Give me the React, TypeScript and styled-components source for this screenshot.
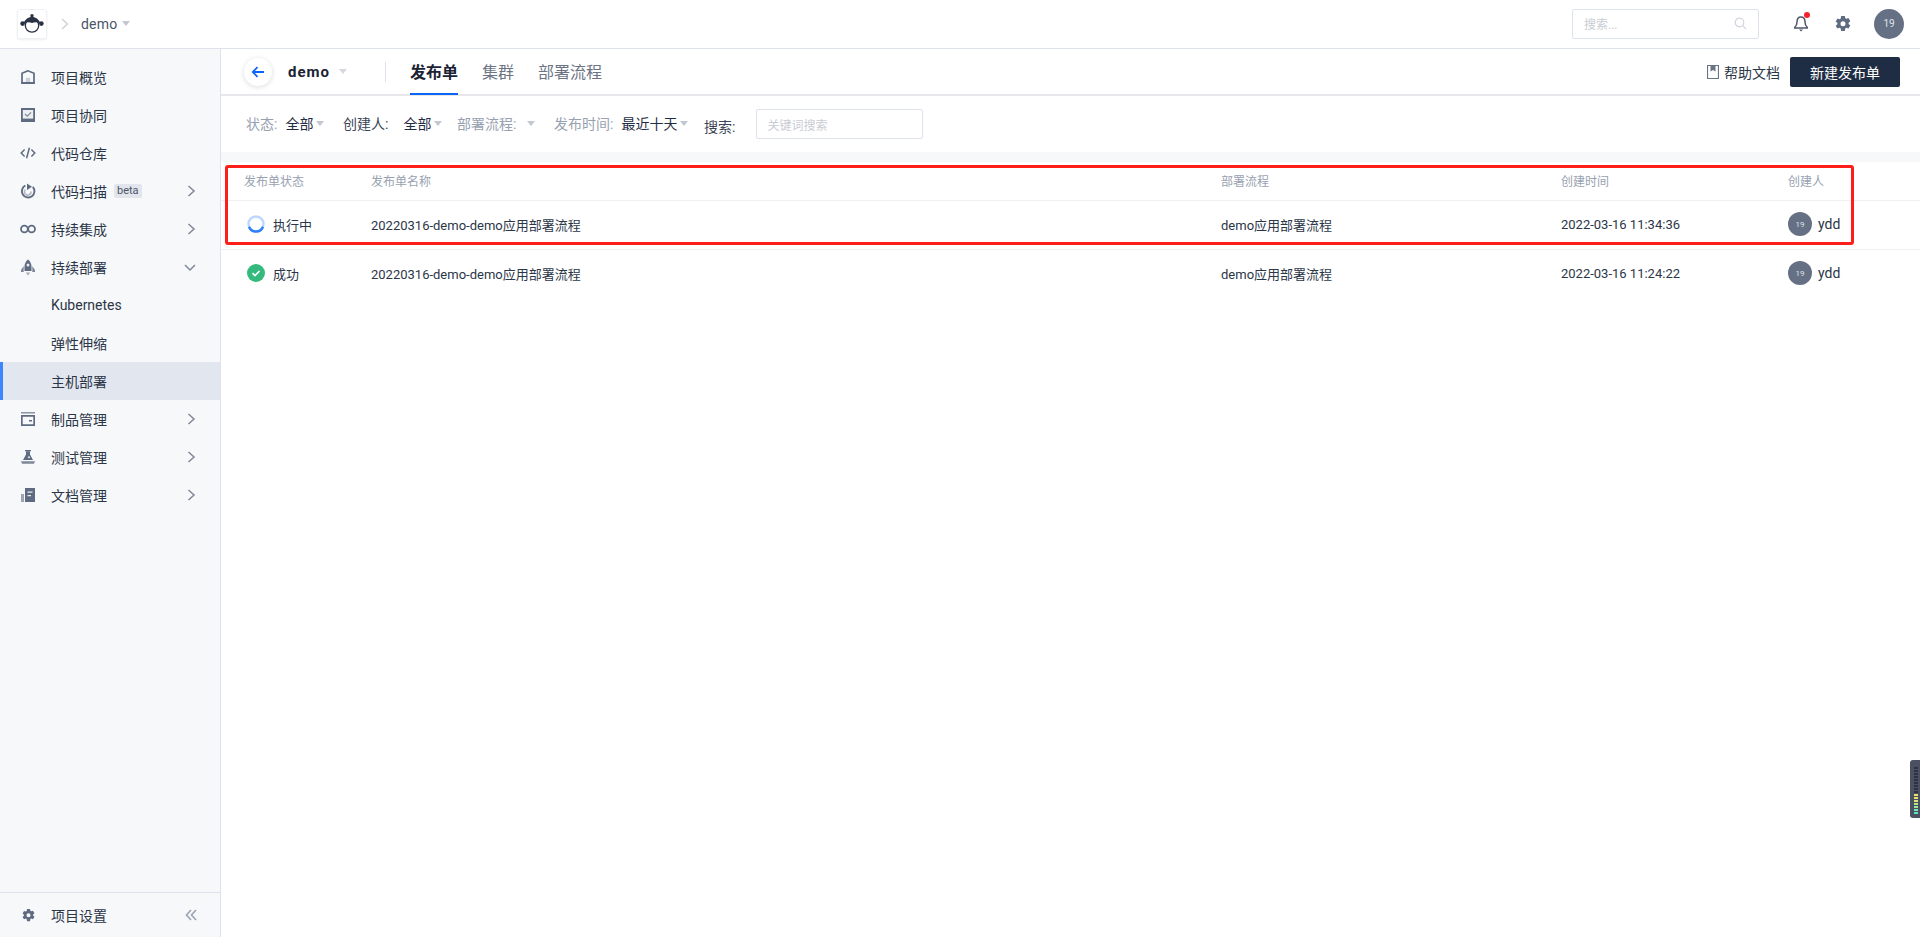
import React from "react";
import styled, { createGlobalStyle } from "styled-components";

const Global = createGlobalStyle`
  html, body { margin: 0; padding: 0; height: 100%; background: #fff; }
  body { font-family: Roboto, "Noto Sans CJK SC", "Noto Sans", sans-serif; color: #1f2d44; overflow: hidden; }
  #root { height: 100%; }
  * { box-sizing: border-box; }
`;

const Page = styled.div`
  position: relative;
  width: 1920px;
  height: 937px;
  display: flex;
  flex-direction: column;
  overflow: hidden;
`;

const TopBar = styled.header`
  height: 49px;
  flex: none;
  border-bottom: 1px solid #dde2ec;
  display: flex;
  align-items: center;
  padding: 0 16px 1px 17px;
`;
const LogoBox = styled.div`
  width: 30px;
  height: 30px;
  border: 1px solid #eef0f4;
  border-radius: 3px;
  box-shadow: 0 1px 2px rgba(30, 40, 70, 0.08);
  display: flex;
  align-items: center;
  justify-content: center;
`;
const Crumb = styled.span`
  display: flex;
  margin: 0 12px 0 14px;
  color: #c9ced8;
`;
const ProjectName = styled.span`
  font-size: 14px;
  letter-spacing: 0.2px;
  color: #4a5568;
`;
const Caret = styled.span<{ $color?: string; $left?: number }>`
  display: inline-block;
  width: 0;
  height: 0;
  margin-left: ${(p) => p.$left ?? 5}px;
  border-left: 4px solid transparent;
  border-right: 4px solid transparent;
  border-top: 5px solid ${(p) => p.$color ?? "#c2c7d0"};
`;
const Spacer = styled.div`
  flex: 1;
`;
const GlobalSearch = styled.div`
  width: 187px;
  height: 30px;
  border: 1px solid #dde2ec;
  border-radius: 2px;
  display: flex;
  align-items: center;
  justify-content: space-between;
  padding: 0 11px;
  font-size: 12px;
  color: #c8ccd3;
`;
const TopIcon = styled.div<{ $left: number }>`
  position: relative;
  display: flex;
  margin-left: ${(p) => p.$left}px;
`;
const RedDot = styled.span`
  position: absolute;
  top: -3px;
  right: -1px;
  width: 6px;
  height: 6px;
  border-radius: 50%;
  background: #f5222d;
`;
const Avatar = styled.div<{ $size: number; $font: number; $left?: number }>`
  width: ${(p) => p.$size}px;
  height: ${(p) => p.$size}px;
  margin-left: ${(p) => p.$left ?? 0}px;
  flex: none;
  border-radius: 50%;
  background: #667085;
  color: #dfe3ea;
  font-size: ${(p) => p.$font}px;
  display: flex;
  align-items: center;
  justify-content: center;
`;

const Body = styled.div`
  flex: 1;
  display: flex;
  min-height: 0;
`;
const Sidebar = styled.aside`
  width: 221px;
  flex: none;
  background: #f7f8fa;
  border-right: 1px solid #dde2ec;
  display: flex;
  flex-direction: column;
`;
const NavList = styled.nav`
  flex: 1;
  padding-top: 9px;
`;
const NavItem = styled.div<{ $active?: boolean; $sub?: boolean }>`
  height: 38px;
  display: flex;
  align-items: center;
  padding: 0 24px 0 ${(p) => (p.$sub ? (p.$active ? 48 : 51) : 20)}px;
  font-size: 14px;
  color: #2b3648;
  background: ${(p) => (p.$active ? "#e2e6ef" : "transparent")};
  border-left: ${(p) => (p.$active ? "3px solid #3d85ff" : "0")};
`;
const NavIcon = styled.span`
  width: 16px;
  height: 16px;
  margin-right: 15px;
  display: flex;
  align-items: center;
  justify-content: center;
  flex: none;
`;
const NavLabel = styled.span`
  flex: 1;
  display: flex;
  align-items: center;
`;
const Beta = styled.span`
  margin-left: 7px;
  padding: 0 3px;
  background: #e2e6ec;
  border-radius: 2px;
  font-size: 11px;
  line-height: 14px;
  color: #4a5568;
`;
const SideFooter = styled.div`
  height: 45px;
  flex: none;
  border-top: 1px solid #dde2ec;
  display: flex;
  align-items: center;
  padding: 0 23px 0 20px;
  font-size: 14px;
  color: #2b3648;
`;

const Main = styled.main`
  flex: 1;
  min-width: 0;
  display: flex;
  flex-direction: column;
`;
const SubHeader = styled.div`
  height: 47px;
  flex: none;
  border-bottom: 2px solid #e6e8ec;
  display: flex;
  align-items: center;
  padding: 0 20px 0 23px;
`;
const BackButton = styled.div`
  width: 28px;
  height: 28px;
  border-radius: 50%;
  background: #fff;
  box-shadow: 0 1px 5px rgba(30, 40, 70, 0.16);
  display: flex;
  align-items: center;
  justify-content: center;
`;
const AppName = styled.span`
  margin-left: 16px;
  font-size: 15px;
  font-weight: 700;
  letter-spacing: 1px;
  color: #1a2233;
`;
const VDivider = styled.span`
  width: 1px;
  height: 20px;
  background: #dde2ec;
  margin: 0 24px 0 38px;
`;
const Tab = styled.div<{ $active?: boolean }>`
  height: 45px;
  margin-right: 24px;
  margin-bottom: -2px;
  padding-bottom: 1px;
  display: flex;
  align-items: center;
  font-size: 16px;
  font-weight: ${(p) => (p.$active ? 600 : 400)};
  color: ${(p) => (p.$active ? "#1a2233" : "#6b7485")};
  border-bottom: 2px solid ${(p) => (p.$active ? "#0b66f5" : "transparent")};
`;
const HelpLink = styled.div`
  display: flex;
  align-items: center;
  gap: 5px;
  font-size: 14px;
  color: #2b3648;
`;
const PrimaryButton = styled.div`
  width: 110px;
  height: 30px;
  margin-left: 10px;
  border-radius: 2px;
  background: #1f2d44;
  color: #fff;
  font-size: 14px;
  display: flex;
  align-items: center;
  justify-content: center;
`;
const FilterBar = styled.div`
  height: 56px;
  flex: none;
  display: flex;
  align-items: center;
  padding: 0 0 0 25px;
  font-size: 14px;
`;
const FilterLabel = styled.span<{ $dark?: boolean }>`
  color: ${(p) => (p.$dark ? "#3a4556" : "#98a1b0")};
`;
const SearchLabel = styled.span`
  padding-top: 4px;
  color: #3a4556;
`;
const FilterValue = styled.span<{ $gap: number }>`
  margin-left: ${(p) => p.$gap}px;
  color: #1f2d44;
  display: flex;
  align-items: center;
`;
const Filter = styled.div<{ $width: number }>`
  width: ${(p) => p.$width}px;
  padding-bottom: 2px;
  display: flex;
  align-items: center;
`;
const KeywordInput = styled.div`
  width: 167px;
  height: 30px;
  margin-left: 21px;
  border: 1px solid #dde2ec;
  border-radius: 2px;
  display: flex;
  align-items: center;
  padding-left: 10px;
  font-size: 12px;
  color: #c8ccd3;
`;
const Strip = styled.div`
  height: 10px;
  flex: none;
  background: #f7f8fa;
`;
const Row = styled.div<{ $header?: boolean; $last?: boolean }>`
  height: ${(p) => (p.$header ? 39 : 49)}px;
  flex: none;
  display: grid;
  grid-template-columns: 127px 850px 340px 227px 1fr;
  align-items: center;
  padding: 0 0 2px 23px;
  border-bottom: 1px solid ${(p) => (p.$last ? "transparent" : "#eef0f3")};
  font-size: ${(p) => (p.$header ? 12 : 13)}px;
  color: ${(p) => (p.$header ? "#98a1b0" : "#2b3648")};
`;
const StatusCell = styled.div`
  display: flex;
  align-items: center;
  gap: 8px;
  padding-left: 3px;
`;
const UserCell = styled.div`
  display: flex;
  align-items: center;
  gap: 6px;
  font-size: 14px;
`;
const Highlight = styled.div`
  position: absolute;
  left: 225px;
  top: 165px;
  width: 1629px;
  height: 80px;
  border: 3px solid #ff1f1a;
  border-radius: 3px;
  pointer-events: none;
`;
const Widget = styled.div`
  position: absolute;
  right: 0;
  top: 760px;
  width: 10px;
  height: 58px;
  background: #4b5163;
  border-radius: 3px 0 0 3px;
  padding: 7px 0 0 4px;
  display: flex;
  flex-direction: column;
  gap: 1px;
`;
const Tick = styled.span<{ $color: string }>`
  display: block;
  width: 4px;
  height: 2px;
  background: ${(p) => p.$color};
`;

const ic = "#5f6b80";
const chev = "#7f8899";

const HomeIcon = () => (
  <svg width="16" height="16" viewBox="0 0 16 16"><path d="M8 1.800 2 4.300V14h12V4.300z" fill="none" stroke={ic} strokeWidth="1.700" /><rect x="1.200" y="13" width="13.600" height="2" fill={ic} /><rect x="5.800" y="8.800" width="4.400" height="4.400" fill={ic} opacity=".28" /></svg>
);
const TaskIcon = () => (
  <svg width="16" height="16" viewBox="0 0 16 16"><path d="M1 1h14v14H1z" fill={ic} /><path d="M2.800 3h10.400v8.600H2.800z" fill="#eceef2" /><path d="m5 7 2.300 2.200 3.800-3.800" stroke={ic} strokeWidth="1.300" fill="none" opacity=".75" /></svg>
);
const CodeIcon = () => (
  <svg width="16" height="16" viewBox="0 0 16 16" fill="none" stroke={ic} strokeWidth="1.500"><path d="M4.600 4.500 1.200 8l3.400 3.500M11.400 4.500 14.800 8l-3.400 3.500" /><path d="M9.400 2.800 6.600 13.200" /></svg>
);
const ScanIcon = () => (
  <svg width="16" height="16" viewBox="0 0 16 16" fill="none"><path d="M5.400 2.500a6.300 6.300 0 1 0 7.400 1.400" stroke={ic} strokeWidth="1.900" /><path d="M7 .5 12 3.800 7 7Z" fill={ic} /><path d="M5.400 6.500A3.300 3.300 0 1 0 11 8.500" stroke={ic} strokeWidth="1.700" opacity=".45" /></svg>
);
const InfinityIcon = () => (
  <svg width="16" height="16" viewBox="0 0 16 16" fill="none" stroke={ic} strokeWidth="1.800"><circle cx="4.400" cy="8" r="3.400" /><circle cx="11.600" cy="8" r="3.400" /></svg>
);
const RocketIcon = () => (
  <svg width="16" height="17" viewBox="0 0 16 17"><path d="M8 .5C5.500 2.500 4.500 5 4.500 8v4h7V8c0-3-1-5.500-3.500-7.500Z" fill={ic} /><circle cx="8" cy="6" r="1.500" fill="#eceef2" /><path d="M3.700 7 1 11v2h2.700zM12.300 7 15 11v2h-2.700z" fill={ic} opacity=".8" /><path d="M5.800 13.500h4.400L8 16.500z" fill={ic} opacity=".55" /></svg>
);
const BoxIcon = () => (
  <svg width="16" height="16" viewBox="0 0 16 16"><rect x="1" y="1" width="14" height="1.500" fill={ic} opacity=".7" /><path fillRule="evenodd" d="M1 4h14v11H1zm1.700 1.700v7.600h10.600V5.700z" fill={ic} /><rect x="9" y="9" width="3" height="1.500" fill={ic} /></svg>
);
const FlaskIcon = () => (
  <svg width="16" height="16" viewBox="0 0 16 16"><rect x="5" y="1" width="6" height="1.300" fill={ic} /><path d="M6 2.300h4v3.200L13 11H3l3-5.500z" fill={ic} /><path d="M1 12.200h14l-1 2.500H2z" fill={ic} opacity=".8" /><circle cx="9" cy="8.300" r="1" fill="#eceef2" /></svg>
);
const DocIcon = () => (
  <svg width="16" height="16" viewBox="0 0 16 16"><path d="M1 7h3v8H1z" fill={ic} opacity=".6" /><path d="M5 1h10v14H5z" fill={ic} /><path d="M7.500 4.500h5v1.300h-5zM7.500 8h3.500v1.300H7.500z" fill="#eceef2" /></svg>
);
const GearIcon = ({ size = 16, color = ic }: { size?: number; color?: string }) => (
  <svg width={size} height={size} viewBox="0 0 16 16"><path fillRule="evenodd" clipRule="evenodd" d="M6.200 0h3.600l.5 2.200 1 .6 2.200-.7 1.800 3.100-1.700 1.500v1.200l1.700 1.500-1.800 3.100-2.200-.7-1 .6-.5 2.600H6.200l-.5-2.600-1-.6-2.200.7L.7 9.800l1.700-1.500V7.100L.7 5.600l1.800-3.100 2.200.7 1-.6.500-2.600ZM8 5.300a2.500 2.500 0 1 0 0 5 2.500 2.500 0 0 0 0-5Z" fill={color} /></svg>
);
const ChevronRight = () => (
  <svg width="9" height="12" viewBox="0 0 9 12" fill="none" stroke={chev} strokeWidth="1.500"><path d="m1.500 1 5.500 5-5.500 5" /></svg>
);
const ChevronDown = () => (
  <svg width="12" height="9" viewBox="0 0 12 9" fill="none" stroke={chev} strokeWidth="1.500"><path d="m1 2 5 5 5-5" /></svg>
);
const DoubleLeft = () => (
  <svg width="12" height="12" viewBox="0 0 12 12" fill="none" stroke="#9aa3b3" strokeWidth="1.600"><path d="M6 1 1.500 6 6 11M11 1 6.500 6l4.500 5" /></svg>
);
const Logo = () => (
  <svg width="24" height="19" viewBox="0 0 24 19">
    <circle cx="12" cy="1.800" r="1.700" fill="#2a3244" />
    <circle cx="2.600" cy="9.600" r="2.300" fill="#2a3244" />
    <circle cx="21.400" cy="9.600" r="2.300" fill="#2a3244" />
    <circle cx="12" cy="11.500" r="6.700" fill="#fff" stroke="#2a3244" strokeWidth="1.300" />
    <path d="M3.500 9.500C5 5.500 8 3 12 3s7 2.500 8.500 6.500C17.500 8 14.500 8 12 9c-2.500-1-5.500-1-8.500.500Z" fill="#2a3244" />
  </svg>
);
const SearchGlyph = () => (
  <svg width="13" height="13" viewBox="0 0 13 13" fill="none" stroke="#d2d6dc" strokeWidth="1.200"><circle cx="5.500" cy="5.500" r="4.300" /><path d="m8.800 8.800 3.400 3.400" /></svg>
);
const Bell = () => (
  <svg width="16" height="17" viewBox="0 0 16 17" fill="none"><path d="M8 2C5 2 4 4.500 4 7c0 2.500-.8 4-2.200 5.300v.7h12.400v-.7C12.800 11 12 9.500 12 7c0-2.500-1-5-4-5Z" stroke="#4c5669" strokeWidth="1.500" /><path d="M6 14.500h4L8 16.500z" fill="#4c5669" /></svg>
);
const BackArrow = () => (
  <svg width="14" height="12" viewBox="0 0 14 12" fill="none" stroke="#0b66f5" strokeWidth="1.800"><path d="M13 6H2M6.500 1.200 1.800 6l4.700 4.800" /></svg>
);
const BookIcon = () => (
  <svg width="12" height="14" viewBox="0 0 12 14"><path d="M.5.500h11v13H.5z" fill="none" stroke="#6b7485" strokeWidth="1.200" /><path d="M3.500 1h5v5.500L6 5 3.500 6.500z" fill="#6b7485" /></svg>
);
const Spinner = () => (
  <svg width="18" height="18" viewBox="0 0 18 18" fill="none"><circle cx="9" cy="9" r="7.500" stroke="#bcd6ff" strokeWidth="2.400" /><path d="M2 11.700A7.500 7.500 0 0 0 16 11.700" stroke="#2f80ff" strokeWidth="2.400" /></svg>
);
const Success = () => (
  <svg width="18" height="18" viewBox="0 0 18 18"><circle cx="9" cy="9" r="9" fill="#34ba7c" /><path d="m5.500 9.200 2.500 2.400 4.500-4.600" stroke="#fff" strokeWidth="1.700" fill="none" /></svg>
);

const navTop = [
  { label: "项目概览", icon: <HomeIcon /> },
  { label: "项目协同", icon: <TaskIcon /> },
  { label: "代码仓库", icon: <CodeIcon /> },
  { label: "代码扫描", icon: <ScanIcon />, beta: true, chevron: true },
  { label: "持续集成", icon: <InfinityIcon />, chevron: true },
];
const navBottom = [
  { label: "制品管理", icon: <BoxIcon /> },
  { label: "测试管理", icon: <FlaskIcon /> },
  { label: "文档管理", icon: <DocIcon /> },
];
const rows = [
  { status: "执行中", icon: <Spinner />, time: "2022-03-16 11:34:36" },
  { status: "成功", icon: <Success />, time: "2022-03-16 11:24:22", last: true },
];
const ticks = ["#2e3344","#2e3344","#2e3344","#2e3344","#2e3344","#2e3344","#2e3344","#2e3344","#2e3344","#e8e36a","#e8e36a","#d8e870","#b8ea84","#98ea94","#78e8a8","#5ce6c0"];

export default function App() {
  return (
    <Page>
      <Global />
      <TopBar>
        <LogoBox><Logo /></LogoBox>
        <Crumb>
          <svg width="8" height="12" viewBox="0 0 8 12" fill="none" stroke="#c9ced8" strokeWidth="1.200"><path d="m1 1 5.500 5L1 11" /></svg>
        </Crumb>
        <ProjectName>demo</ProjectName>
        <Caret />
        <Spacer />
        <GlobalSearch>搜索...<SearchGlyph /></GlobalSearch>
        <TopIcon $left={34}><Bell /><RedDot /></TopIcon>
        <TopIcon $left={26}><GearIcon /></TopIcon>
        <Avatar $size={30} $font={10} $left={23}>19</Avatar>
      </TopBar>
      <Body>
        <Sidebar>
          <NavList>
            {navTop.map((n) => (
              <NavItem key={n.label}>
                <NavIcon>{n.icon}</NavIcon>
                <NavLabel>{n.label}{n.beta && <Beta>beta</Beta>}</NavLabel>
                {n.chevron && <ChevronRight />}
              </NavItem>
            ))}
            <NavItem>
              <NavIcon><RocketIcon /></NavIcon>
              <NavLabel>持续部署</NavLabel>
              <ChevronDown />
            </NavItem>
            <NavItem $sub>Kubernetes</NavItem>
            <NavItem $sub>弹性伸缩</NavItem>
            <NavItem $sub $active>主机部署</NavItem>
            {navBottom.map((n) => (
              <NavItem key={n.label}>
                <NavIcon>{n.icon}</NavIcon>
                <NavLabel>{n.label}</NavLabel>
                <ChevronRight />
              </NavItem>
            ))}
          </NavList>
          <SideFooter>
            <NavIcon><GearIcon size={13} /></NavIcon>
            <NavLabel>项目设置</NavLabel>
            <DoubleLeft />
          </SideFooter>
        </Sidebar>
        <Main>
          <SubHeader>
            <BackButton><BackArrow /></BackButton>
            <AppName>demo</AppName>
            <Caret $left={9} $color="#d5d8de" />
            <VDivider />
            <Tab $active>发布单</Tab>
            <Tab>集群</Tab>
            <Tab>部署流程</Tab>
            <Spacer />
            <HelpLink><BookIcon />帮助文档</HelpLink>
            <PrimaryButton>新建发布单</PrimaryButton>
          </SubHeader>
          <FilterBar>
            <Filter $width={97}><FilterLabel>状态:</FilterLabel><FilterValue $gap={8}>全部<Caret $left={3} /></FilterValue></Filter>
            <Filter $width={114}><FilterLabel $dark>创建人:</FilterLabel><FilterValue $gap={15}>全部<Caret $left={3} /></FilterValue></Filter>
            <Filter $width={97}><FilterLabel>部署流程:</FilterLabel><Caret $left={11} /></Filter>
            <Filter $width={150}><FilterLabel>发布时间:</FilterLabel><FilterValue $gap={8}>最近十天<Caret $left={3} /></FilterValue></Filter>
            <SearchLabel>搜索:</SearchLabel>
            <KeywordInput>关键词搜索</KeywordInput>
          </FilterBar>
          <Strip />
          <Row $header>
            <span>发布单状态</span><span>发布单名称</span><span>部署流程</span><span>创建时间</span><span>创建人</span>
          </Row>
          {rows.map((r) => (
            <Row key={r.time} $last={r.last}>
              <StatusCell>{r.icon}{r.status}</StatusCell>
              <span>20220316-demo-demo应用部署流程</span>
              <span>demo应用部署流程</span>
              <span>{r.time}</span>
              <UserCell><Avatar $size={24} $font={8}>19</Avatar>ydd</UserCell>
            </Row>
          ))}
        </Main>
      </Body>
      <Highlight />
      <Widget>{ticks.map((c, i) => <Tick key={i} $color={c} />)}</Widget>
    </Page>
  );
}
